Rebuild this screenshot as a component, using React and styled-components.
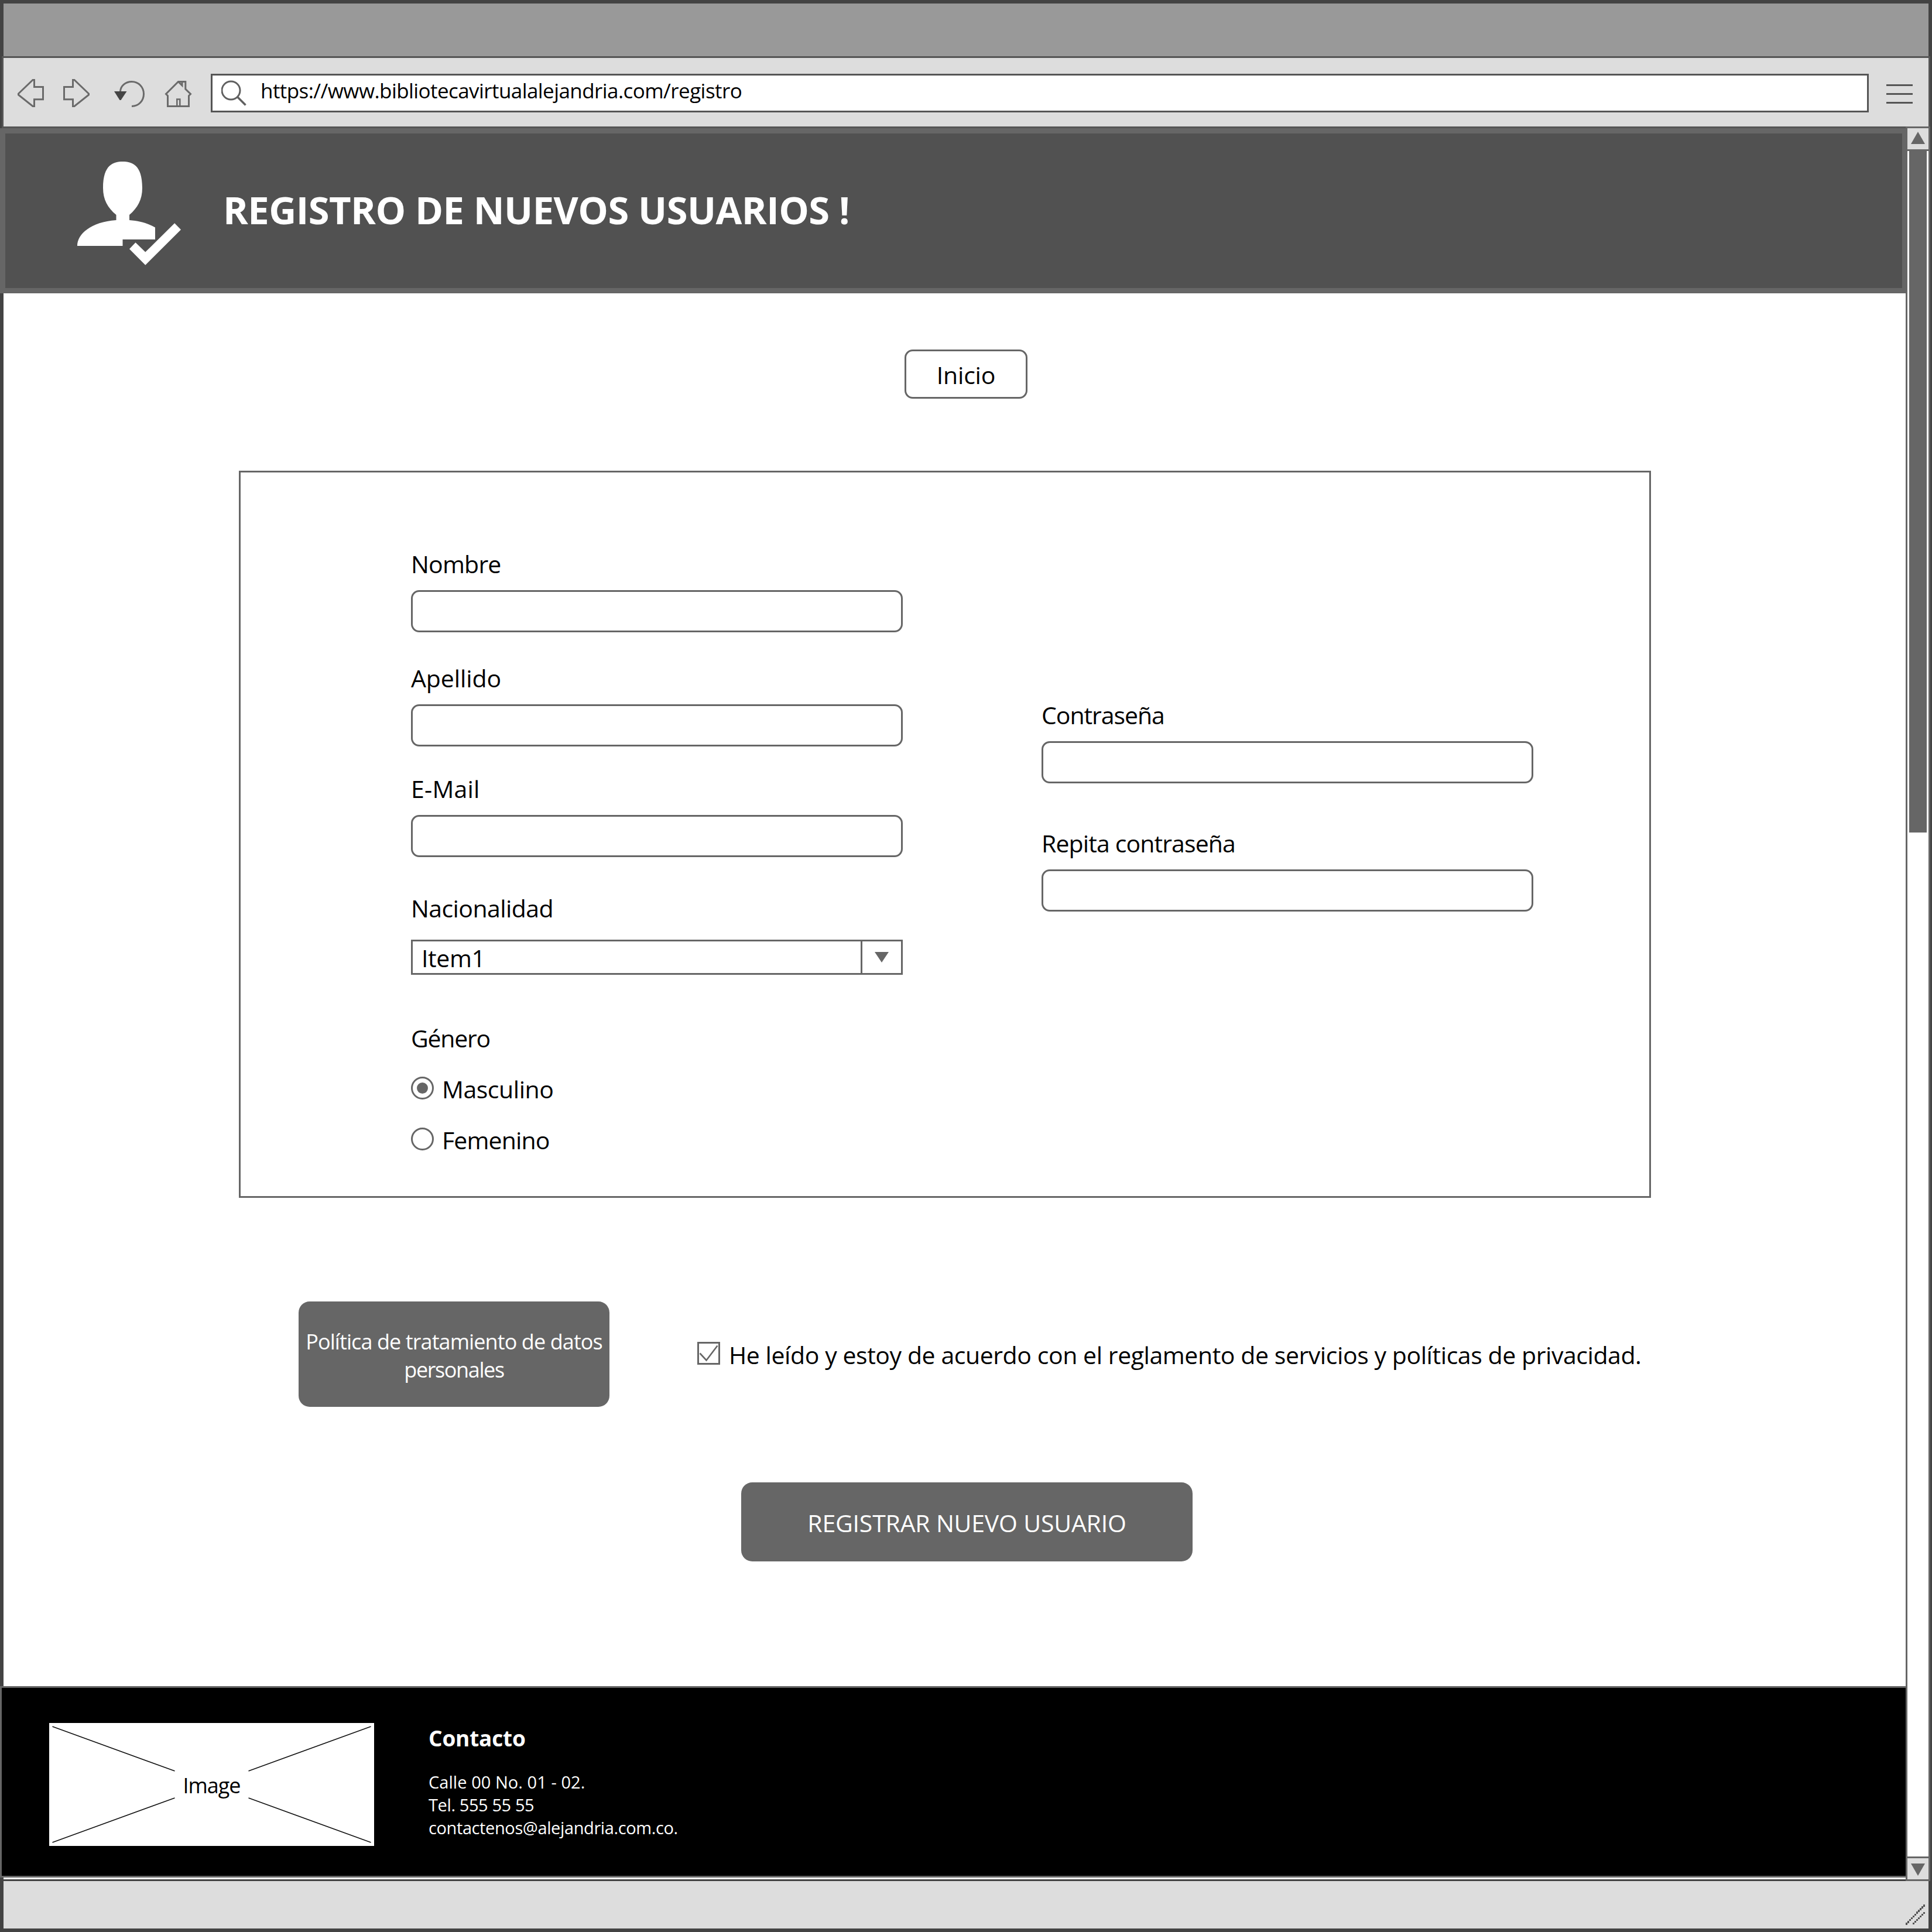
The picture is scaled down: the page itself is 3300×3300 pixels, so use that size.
import React from 'react';
import styled, { createGlobalStyle } from 'styled-components';

const INK = '#666666';
const FRAME = '#434343';
const CHROME = '#555555';
const PANEL = '#dddddd';

const GlobalStyle = createGlobalStyle`
  *, *::before, *::after { box-sizing: border-box; }
  html, body { margin: 0; padding: 0; background: ${FRAME}; }
  body { font-family: 'Open Sans', 'Noto Sans', sans-serif; color: #000; }
  svg { display: block; flex: none; }
`;

const Window = styled.div`
  width: 3300px;
  height: 3300px;
  display: flex;
  flex-direction: column;
  background: ${FRAME};
  overflow: hidden;
`;

const TitleBar = styled.div`
  flex: none;
  height: 90px;
  margin: 6px 6px 0;
  background: #999999;
`;

const Toolbar = styled.div`
  flex: none;
  display: flex;
  height: 123px;
  margin: 0 3px;
  padding: 27px 27px 0 24px;
  border: 3px solid ${CHROME};
  background: ${PANEL};
`;

const NavIcons = styled.div`
  display: flex;
  width: 330px;
`;

const AddressBar = styled.div`
  display: flex;
  width: 2832px;
  height: 66px;
  padding: 1px 0 0 15px;
  border: 3px solid ${CHROME};
  background: #fff;
`;

const MenuIcon = styled.div`
  display: flex;
  flex-direction: column;
  gap: 12px;
  margin: 18px 0 0 30px;
`;

const MenuLine = styled.span`
  width: 45px;
  height: 3px;
  background: ${CHROME};
`;

const Text = styled.span`
  display: block;
  white-space: nowrap;
  font-size: ${(p) => p.$size || 41}px;
  line-height: ${(p) => p.$line || 60}px;
  font-weight: ${(p) => (p.$bold ? 700 : 400)};
  letter-spacing: ${(p) => p.$track || 0}px;
`;

const Url = styled(Text)`
  margin: 1px 0 0 22px;
`;

const Body = styled.div`
  flex: none;
  display: flex;
  height: 2994px;
`;

const Page = styled.div`
  flex: none;
  display: flex;
  flex-direction: column;
  width: 3255px;
`;

const Header = styled.header`
  flex: none;
  display: flex;
  height: 282px;
  border: 9px solid ${INK};
  border-right-width: 6px;
  background: #515151;
  color: #fff;
`;

const Title = styled.h1`
  margin: 85px 0 0 69px;
  font-size: 65px;
  line-height: 90px;
  font-weight: 700;
  white-space: nowrap;
  letter-spacing: -0.54px;
`;

const UserIcon = styled.svg`
  margin: 45px 0 0 120px;
`;

const Main = styled.main`
  flex: none;
  display: flex;
  flex-direction: column;
  height: 2379px;
  padding-top: 96px;
  border-left: 6px solid ${FRAME};
  background: #fff;
`;

const HomeButton = styled.button`
  display: flex;
  align-items: center;
  justify-content: center;
  width: 210px;
  height: 84px;
  margin: 0 0 0 1539px;
  padding: 2px 0 0;
  border: 3px solid ${INK};
  border-radius: 14px;
  background: #fff;
  color: #000;
  font-family: inherit;
`;

const FormPanel = styled.form`
  display: flex;
  gap: 237px;
  width: 2412px;
  height: 1242px;
  margin: 123px 0 0 402px;
  padding-left: 291px;
  border: 3px solid ${INK};
`;

const Column = styled.div`
  display: flex;
  flex-direction: column;
  width: 840px;
  padding-top: ${(p) => p.$top}px;
`;

const Field = styled.label`
  display: flex;
  flex-direction: column;
  gap: ${(p) => p.$gap || 15}px;
  margin-top: ${(p) => p.$mt || 0}px;
`;

const Input = styled.input`
  width: 840px;
  height: 72px;
  margin: 0;
  padding: 0 18px;
  border: 3px solid ${INK};
  border-radius: 14px;
  background: #fff;
  font: 41px 'Open Sans', sans-serif;
  outline: none;
`;

const Select = styled.div`
  display: flex;
  height: 60px;
  border: 3px solid ${INK};
  background: #fff;
`;

const SelectValue = styled.div`
  width: 765px;
  padding-left: 15px;
`;

const SelectArrow = styled.div`
  display: flex;
  width: 69px;
  padding: 18px 0 0 21px;
  border-left: 3px solid ${INK};
`;

const OptionRow = styled.label`
  display: flex;
  gap: 14px;
  height: 60px;
  margin-top: 27px;
`;

const Radio = styled.span`
  display: flex;
  align-items: center;
  justify-content: center;
  width: 39px;
  height: 39px;
  margin-top: 9px;
  border: 3px solid ${INK};
  border-radius: 50%;

  &::after {
    content: '';
    width: 19px;
    height: 19px;
    border-radius: 50%;
    background: ${(p) => (p.$on ? INK : 'transparent')};
  }
`;

const Agreement = styled.div`
  display: flex;
  gap: 150px;
  margin: 177px 0 0 504px;
`;

const SolidButton = styled.button`
  display: flex;
  flex-direction: column;
  align-items: center;
  justify-content: center;
  width: ${(p) => p.$w}px;
  height: ${(p) => p.$h}px;
  padding: ${(p) => p.$drop || 2}px 0 0;
  border: 0;
  border-radius: 19px;
  background: ${INK};
  color: #fff;
  font-family: inherit;
`;

const RegisterButton = styled(SolidButton)`
  margin: 129px 0 0 1260px;
`;

const CheckRow = styled.label`
  display: flex;
  gap: 15px;
  padding-top: 61px;
`;

const CheckIcon = styled.svg`
  margin-top: 8px;
`;

const Footer = styled.footer`
  flex: none;
  display: flex;
  height: 327px;
  padding: 60px 0 0 81px;
  border: 3px solid ${INK};
  border-right: 0;
  background: #000;
  color: #fff;
`;

const ImageBox = styled.div`
  display: grid;
  place-items: center;
  width: 555px;
  height: 210px;
  background: #fff;
  color: #000;

  & > * { grid-area: 1 / 1; }
`;

const Caption = styled(Text)`
  padding-top: 4px;
`;

const Contact = styled.div`
  display: flex;
  flex-direction: column;
  margin-left: 93px;
  padding-top: 2px;
`;

const ContactLines = styled.div`
  margin-top: 31px;
`;

const Gap = styled.div`
  flex: none;
  height: 3px;
  border-left: 6px solid ${FRAME};
  background: #fff;
`;

const Scrollbar = styled.div`
  flex: none;
  display: flex;
  flex-direction: column;
  width: 42px;
  height: 2997px;
  margin-top: -3px;
  border: 3px solid ${INK};
  background: #fff;
`;

const ScrollButton = styled.div`
  flex: none;
  display: flex;
  justify-content: center;
  height: 39px;
  padding-top: ${(p) => (p.$down ? 9 : 6)}px;
  background: ${PANEL};
  border: 0 solid ${INK};
  border-top-width: ${(p) => (p.$down ? 3 : 0)}px;
  border-bottom-width: ${(p) => (p.$down ? 0 : 3)}px;
`;

const Track = styled.div`
  flex: 1;
  padding: 0 3px;
`;

const Thumb = styled.div`
  height: 1164px;
  background: ${INK};
`;

const StatusBar = styled.div`
  flex: none;
  display: flex;
  justify-content: flex-end;
  height: 81px;
  margin: 0 6px;
  padding: 40px 6px 0 0;
  background: ${PANEL};
`;

/* Back, forward, reload and home, drawn in window coordinates */
const Navigation = () => (
  <svg width="310" height="66" viewBox="30 126 310 66" fill="none" stroke="#6a6a6a" strokeWidth="3">
    <path d="M31.5 160 56 136.500H58.500V148.500H73.500V169.700H58.500V181.500H56L31.500 162Z" />
    <path d="M151.500 160 127 136.500H124.500V148.500H109.500V169.700H124.500V181.500H127L151.500 162Z" />
    <path d="M205.500 156C206 147 214 139.500 225 139.500C237 139.500 245.500 149 245.500 160.500C245.500 172 237 181.500 225 181.500" />
    <path d="M195 156H216.500L206.500 171H204.500Z" fill="#444" stroke="none" />
    <path d="M286.500 181.500V163.500L283.500 160.500L304.500 139.500H316.800V152L325.500 160.500L322.500 163.500V181.500Z" />
    <path d="M302.300 181V169.500H307.300V181" strokeWidth="2.600" />
    <path d="M305 140 311 146V140" />
  </svg>
);

const Search = () => (
  <svg width="45" height="58" viewBox="378 130 45 58" fill="none" stroke="#606060" strokeWidth="3">
    <circle cx="394.500" cy="154.500" r="15.500" />
    <path d="M405.500 165.500 419.500 179.500" strokeWidth="3.500" />
  </svg>
);

const Person = () => (
  <UserIcon width="183" height="183" viewBox="129 273 183 183" fill="#fff">
    <path d="M209.500 276C194 276 176 281 176 321C176 341 184 355 198.500 367V376C155 379 132 400 132 420H209.500V409H265V388.500C254 382 238 377 221 376V367C235 355 243 341 243 321C243 281 225 276 209.500 276Z" />
    <path d="M221 425.300 231.500 414.300 248.300 430.600 298.200 381.300 309 392.300 248.300 452.700Z" />
  </UserIcon>
);

const TextField = ({ label, track, mt, type = 'text' }) => (
  <Field $mt={mt}>
    <Text $track={track}>{label}</Text>
    <Input type={type} />
  </Field>
);

const Option = ({ label, track, on }) => (
  <OptionRow>
    <Radio $on={on} />
    <Text $track={track}>{label}</Text>
  </OptionRow>
);

const GRIP_LONG = Array.from({ length: 11 }, (_, i) => i);
const GRIP_SHORT = Array.from({ length: 7 }, (_, i) => i);

export default function App() {
  return (
    <>
      <GlobalStyle />
      <Window>
        <TitleBar />
        <Toolbar>
          <NavIcons>
            <Navigation />
          </NavIcons>
          <AddressBar>
            <Search />
            <Url $size={35} $line={48} $track={-0.57}>https://www.bibliotecavirtualalejandria.com/registro</Url>
          </AddressBar>
          <MenuIcon>
            <MenuLine />
            <MenuLine />
            <MenuLine />
          </MenuIcon>
        </Toolbar>

        <Body>
          <Page>
            <Header>
              <Person />
              <Title>REGISTRO DE NUEVOS USUARIOS !</Title>
            </Header>

            <Main>
              <HomeButton type="button">
                <Text $track={-0.2}>Inicio</Text>
              </HomeButton>

              <FormPanel>
                <Column $top={126}>
                  <TextField label="Nombre" track={-0.8} />
                  <TextField label="Apellido" track={-0.1} mt={48} />
                  <TextField label="E-Mail" track={0.2} mt={42} />
                  <Field as="div" $mt={57} $gap={24}>
                    <Text $track={-0.57}>Nacionalidad</Text>
                    <Select>
                      <SelectValue>
                        <Text $line={56} $track={-0.4}>Item1</Text>
                      </SelectValue>
                      <SelectArrow>
                        <svg width="24" height="18">
                          <path d="M0 0H24L12 18Z" fill={INK} />
                        </svg>
                      </SelectArrow>
                    </Select>
                  </Field>
                  <Field as="div" $mt={78}>
                    <Text $track={-1.25}>Género</Text>
                  </Field>
                  <Option label="Masculino" track={-0.45} on />
                  <Option label="Femenino" track={-0.85} />
                </Column>
                <Column $top={384}>
                  <TextField label="Contraseña" track={-1.05} type="password" />
                  <TextField label="Repita contraseña" track={-0.88} mt={72} type="password" />
                </Column>
              </FormPanel>

              <Agreement>
                <SolidButton type="button" $w={531} $h={180} $drop={5}>
                  <Text $size={36} $line={48} $track={-0.91}>Política de tratamiento de datos</Text>
                  <Text $size={36} $line={48} $track={-1.4}>personales</Text>
                </SolidButton>
                <CheckRow>
                  <CheckIcon width="39" height="39" fill="none" stroke={INK}>
                    <rect x="1.500" y="1.500" width="36" height="36" strokeWidth="3" />
                    <path d="M4.500 19.500 15.500 31.500 34.500 6.500" strokeWidth="2.600" />
                  </CheckIcon>
                  <Text $track={-0.43}>
                    He leído y estoy de acuerdo con el reglamento de servicios y políticas de privacidad.
                  </Text>
                </CheckRow>
              </Agreement>

              <RegisterButton type="button" $w={771} $h={135}>
                <Text $track={-0.2}>REGISTRAR NUEVO USUARIO</Text>
              </RegisterButton>
            </Main>

            <Footer>
              <ImageBox>
                <svg width="555" height="210" fill="none" stroke="#111" strokeWidth="1.600">
                  <path d="M5.500 6 214.500 82M340.500 82 549.500 6M5.500 204 214.500 128M340.500 128 549.500 204" />
                </svg>
                <Caption $size={36} $line={48} $track={-1}>Image</Caption>
              </ImageBox>
              <Contact>
                <Text $size={37} $line={48} $track={-0.2} $bold>Contacto</Text>
                <ContactLines>
                  <Text $size={29} $line={39} $track={0.05}>Calle 00 No. 01 - 02.</Text>
                  <Text $size={29} $line={39} $track={-0.4}>Tel. 555 55 55</Text>
                  <Text $size={29} $line={39} $track={-0.39}>contactenos@alejandria.com.co.</Text>
                </ContactLines>
              </Contact>
            </Footer>
            <Gap />
          </Page>

          <Scrollbar>
            <ScrollButton>
              <svg width="24" height="21">
                <path d="M0 21H24L12 0Z" fill={INK} />
              </svg>
            </ScrollButton>
            <Track>
              <Thumb />
            </Track>
            <ScrollButton $down>
              <svg width="24" height="21">
                <path d="M0 0H24L12 21Z" fill={INK} />
              </svg>
            </ScrollButton>
          </Scrollbar>
        </Body>

        <StatusBar>
          <svg width="33" height="35" fill={CHROME} shapeRendering="crispEdges">
            {GRIP_LONG.map((i) => (
              <rect key={i} x={3 * i} y={31 - 3.1 * i} width="3" height="3.600" />
            ))}
            {GRIP_SHORT.map((i) => (
              <rect key={i} x={12 + 3 * i} y={31 - 3 * i} width="3" height="3.400" />
            ))}
          </svg>
        </StatusBar>
      </Window>
    </>
  );
}
